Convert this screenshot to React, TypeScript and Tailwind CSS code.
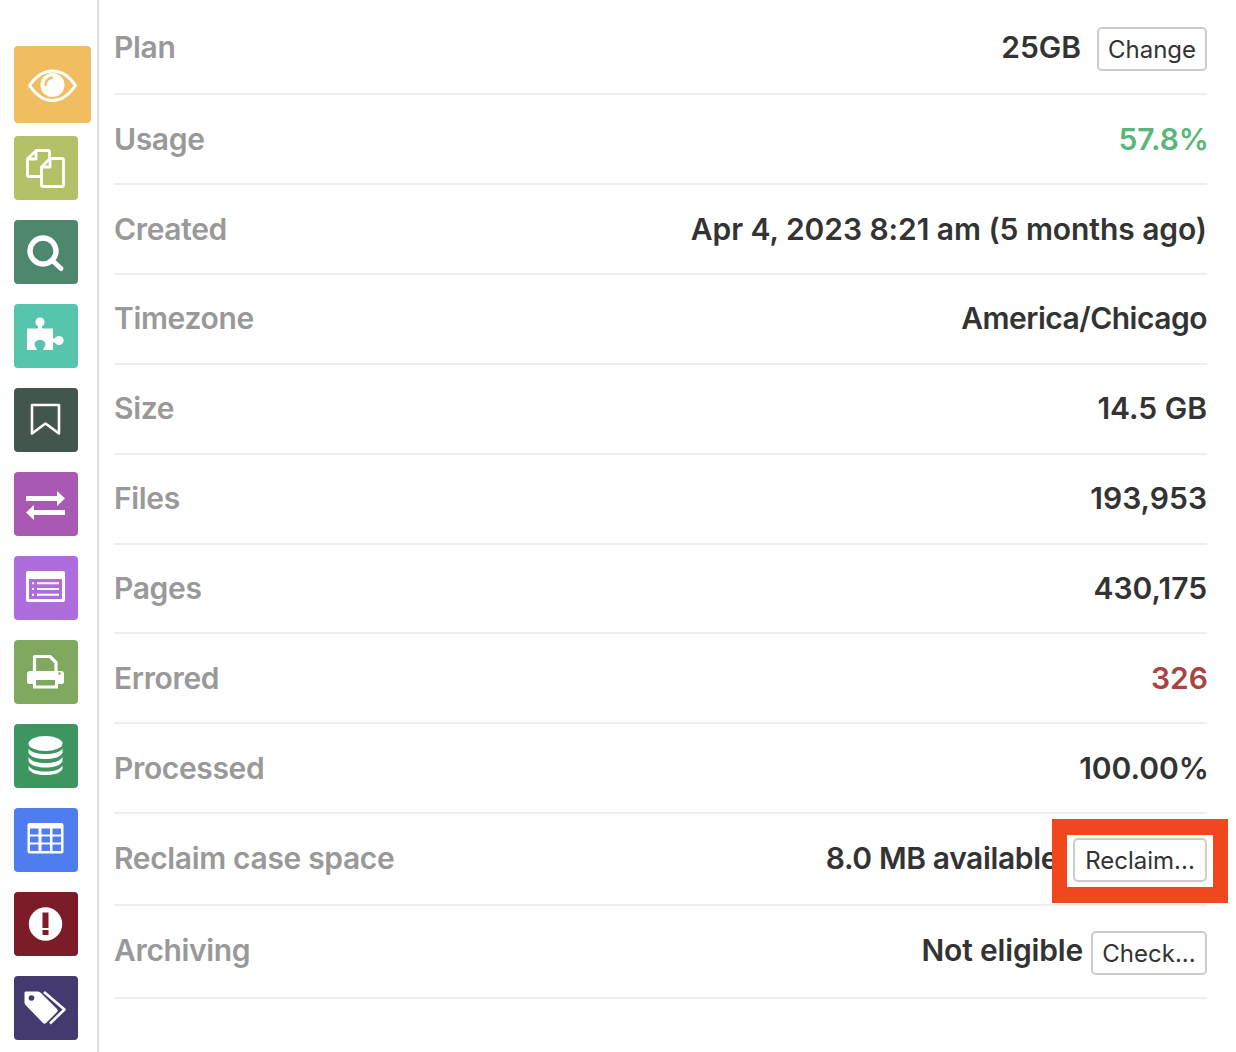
import React from "react";

const S = ({ children, size = 64 }: { children: React.ReactNode; size?: number }) => (
  <svg width={size} height={size} viewBox={`0 0 ${size} ${size}`} fill="none" className="block">
    {children}
  </svg>
);

const tiles: { cls: string; bg: string; size?: number; icon: React.ReactNode }[] = [
  {
    cls: "w-[77px] h-[77px] mb-[13px]",
    bg: "bg-[#f0be60]",
    size: 77,
    icon: (
      <>
        <path d="M15.500 39.500C22 30 30 25 38.500 25S55 30 61.500 39.500C55 49 47 54.500 38.500 54.500S22 49 15.500 39.500Z" stroke="#fff" strokeWidth="3" strokeLinejoin="round" />
        <circle cx="38.500" cy="39" r="12" fill="#fff" />
        <path d="M31.500 39C31.500 35 34.500 32 38 31.500" stroke="#f0be60" strokeWidth="2.400" strokeLinecap="round" />
      </>
    ),
  },
  {
    cls: "w-16 h-16 mb-5",
    bg: "bg-[#b5c069]",
    icon: (
      <g stroke="#fff" strokeWidth="2.800" strokeLinejoin="round">
        <path d="M22 14.500H34C35 14.500 35.500 15 35.500 16V39C35.500 40 35 40.500 34 40.500H15C14 40.500 13.500 40 13.500 39V23Z" />
        <path d="M22 14.500V23H13.500" />
        <path d="M36 22.500H48C49 22.500 49.500 23 49.500 24V49C49.500 50 49 50.500 48 50.500H29C28 50.500 27.500 50 27.500 49V31Z" fill="#b5c069" />
        <path d="M36 22.500V31H27.500" />
      </g>
    ),
  },
  {
    cls: "w-16 h-16 mb-5",
    bg: "bg-[#4d876d]",
    icon: (
      <>
        <circle cx="29" cy="31" r="13" stroke="#fff" strokeWidth="5.400" />
        <path d="M40 42L47 48.500" stroke="#fff" strokeWidth="5" strokeLinecap="round" />
      </>
    ),
  },
  {
    cls: "w-16 h-16 mb-5",
    bg: "bg-[#56c5ab]",
    icon: (
      <g fill="#fff">
        <path d="M13 24.500H39V46H29C30 43 31.500 42 31.500 40.500C31.500 37.500 29 36 26 36S20.500 37.500 20.500 40.500C20.500 42 22 43 23 46H13Z" />
        <circle cx="26" cy="18" r="4.600" />
        <rect x="24" y="20" width="4" height="6" />
        <circle cx="45" cy="36.500" r="4.600" />
        <rect x="38" y="34.500" width="5" height="4" />
      </g>
    ),
  },
  {
    cls: "w-16 h-16 mb-5",
    bg: "bg-[#43564d]",
    icon: <path d="M18 17H45V45.500L31.500 35.500L18 45.500Z" stroke="#fff" strokeWidth="2.600" strokeLinejoin="round" />,
  },
  {
    cls: "w-16 h-16 mb-5",
    bg: "bg-[#a85ab3]",
    icon: (
      <g fill="#fff">
        <path d="M12 24H43V19L51 26.500L43 34V29H12Z" />
        <path d="M51 38H20V33L12 40.500L20 48V43H51Z" />
      </g>
    ),
  },
  {
    cls: "w-16 h-16 mb-5",
    bg: "bg-[#ae6cdc]",
    icon: (
      <>
        <rect x="12" y="15" width="39" height="31" rx="2" fill="#fff" />
        <rect x="15" y="23" width="33" height="20" fill="#ae6cdc" />
        <path d="M23 27.300H45M23 33H45M23 38.700H45" stroke="#fff" strokeWidth="2" />
        <path d="M18 27.300H20M18 33H20M18 38.700H20" stroke="#fff" strokeWidth="2" />
      </>
    ),
  },
  {
    cls: "w-16 h-16 mb-5",
    bg: "bg-[#80a95f]",
    icon: (
      <>
        <path d="M20.500 32V16.500H36L42 22.500V32" stroke="#fff" strokeWidth="3.200" strokeLinejoin="round" />
        <path d="M16 31H47C49 31 50 32 50 34V42C50 43 49 44 48 44H43V39H20V44H15C14 44 13 43 13 42V34C13 32 14 31 16 31Z" fill="#fff" />
        <rect x="20.500" y="38.500" width="22" height="8.500" stroke="#fff" strokeWidth="3" />
        <circle cx="45.500" cy="33.500" r="1.200" fill="#80a95f" />
      </>
    ),
  },
  {
    cls: "w-16 h-16 mb-5",
    bg: "bg-[#3d9660]",
    icon: (
      <g fill="#fff">
        <ellipse cx="31.500" cy="19.500" rx="17" ry="7.500" />
        <path d="M14.500 24.500C17 28.500 24 30 31.500 30S46 28.500 48.500 24.500V29C46 33.500 39 35 31.500 35S17 33.500 14.500 29Z" />
        <path d="M14.500 33C17 37.500 24 39 31.500 39S46 37.500 48.500 33V37.500C46 42 39 43.500 31.500 43.500S17 42 14.500 37.500Z" />
        <path d="M14.500 41.500C17 46 24 47.500 31.500 47.500S46 46 48.500 41.500V45C46 49.500 39 51 31.500 51S17 49.500 14.500 45Z" />
      </g>
    ),
  },
  {
    cls: "w-16 h-16 mb-5",
    bg: "bg-[#4f7df0]",
    icon: (
      <>
        <rect x="13.500" y="15" width="36" height="30.500" rx="2" fill="#fff" />
        <g fill="#4f7df0">
          <rect x="16" y="20.500" width="8.500" height="6" />
          <rect x="27.500" y="20.500" width="8.500" height="6" />
          <rect x="38.500" y="20.500" width="8.500" height="6" />
          <rect x="16" y="28.500" width="8.500" height="6" />
          <rect x="27.500" y="28.500" width="8.500" height="6" />
          <rect x="38.500" y="28.500" width="8.500" height="6" />
          <rect x="16" y="36.500" width="8.500" height="6.500" />
          <rect x="27.500" y="36.500" width="8.500" height="6.500" />
          <rect x="38.500" y="36.500" width="8.500" height="6.500" />
        </g>
      </>
    ),
  },
  {
    cls: "w-16 h-16 mb-5",
    bg: "bg-[#7c1c28]",
    icon: (
      <>
        <circle cx="31.500" cy="32" r="16.700" fill="#fff" />
        <rect x="28.500" y="20.500" width="6" height="15.500" fill="#7c1c28" />
        <rect x="28.500" y="38" width="6" height="5" fill="#7c1c28" />
      </>
    ),
  },
  {
    cls: "w-16 h-16",
    bg: "bg-[#453a70]",
    icon: (
      <>
        <path d="M12 15.500H24C25 15.500 26 16 27 17L43 33C44 34 44 35 43 36L32 47C31 48 30 48 29 47L12.500 30C11 28.500 10.500 27.500 10.500 26V17C10.500 16 11 15.500 12 15.500Z" fill="#fff" />
        <circle cx="17.500" cy="22" r="2.800" fill="#453a70" />
        <path d="M30 16L50.500 33.500L36 47.500" stroke="#fff" strokeWidth="2.600" strokeLinejoin="round" />
      </>
    ),
  },
];

const btn =
  "h-[44px] rounded-[5px] border-2 border-[#ccc] bg-white pt-[2px] text-[24px] font-normal text-[#333] flex items-center justify-center shrink-0";

const rows: { label: string; value: string; cls: string; valueCls?: string; gap?: string; button?: string; btnCls?: string }[] = [
  { label: "Plan", value: "25GB", cls: "h-[95px] pt-[2px]", gap: "gap-4", button: "Change", btnCls: "w-[110px] mt-[3px]" },
  { label: "Usage", value: "57.8%", cls: "h-[90px]", valueCls: "text-[#5cb67a] -mr-[2px]" },
  { label: "Created", value: "Apr 4, 2023 8:21 am (5 months ago)", cls: "h-[90px]", valueCls: "text-[#333] tracking-[-0.06px]" },
  { label: "Timezone", value: "America/Chicago", cls: "h-[90px] pb-[2px]", valueCls: "text-[#333] tracking-[-0.5px]" },
  { label: "Size", value: "14.5 GB", cls: "h-[90px] pb-[2px]" },
  { label: "Files", value: "193,953", cls: "h-[90px] pb-[2px]" },
  { label: "Pages", value: "430,175", cls: "h-[89px]" },
  { label: "Errored", value: "326", cls: "h-[90px]", valueCls: "text-[#a94442] -mr-px" },
  { label: "Processed", value: "100.00%", cls: "h-[90px]", valueCls: "text-[#333] -mr-[2px]" },
  { label: "Reclaim case space", value: "8.0 MB available", cls: "h-[92px] pb-[2px]", valueCls: "text-[#333] tracking-[-0.37px]", gap: "gap-[15px]", button: "Reclaim...", btnCls: "w-[134px] mt-1" },
  { label: "Archiving", value: "Not eligible", cls: "h-[93px] pb-[2px]", valueCls: "text-[#333] tracking-[-0.17px]", gap: "gap-2", button: "Check...", btnCls: "w-[116px] mt-[5px]" },
];

export default function App() {
  return (
    <div className="relative flex h-[1052px] w-[1236px] overflow-hidden bg-white font-['Inter','Liberation_Sans',sans-serif]">
      <aside className="flex h-full w-[99px] shrink-0 flex-col items-start border-r-2 border-[#ddd] pl-[14px] pt-[46px]">
        {tiles.map((t, i) => (
          <div key={i} className={`${t.cls} ${t.bg} shrink-0 overflow-hidden rounded-[4px]`}>
            <S size={t.size ?? 64}>{t.icon}</S>
          </div>
        ))}
      </aside>
      <main className="w-[1108px] pl-[15px]">
        {rows.map((r) => (
          <div key={r.label} className={`${r.cls} flex items-center justify-between border-b-2 border-[#eee]`}>
            <span className="text-[30px] font-semibold tracking-[-0.35px] text-[#999]">{r.label}</span>
            <span className={`flex items-center ${r.gap ?? ""}`}>
              <span className={`text-[30px] font-semibold ${r.valueCls ?? "text-[#333]"}`}>{r.value}</span>
              {r.button && <span className={`${btn} ${r.btnCls}`}>{r.button}</span>}
            </span>
          </div>
        ))}
      </main>
      <div className="absolute left-[1052px] top-[819px] h-[84px] w-[176px] border-x-[15px] border-y-[16px] border-[#f1471d]" />
    </div>
  );
}
